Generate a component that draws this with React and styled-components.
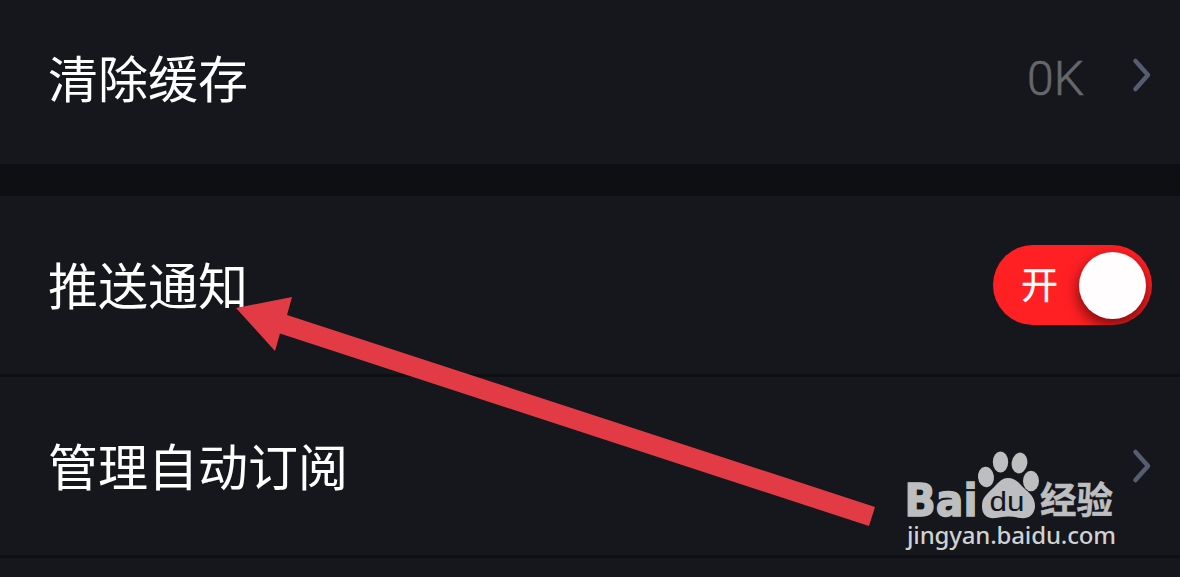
import React from "react";
import styled, { createGlobalStyle } from "styled-components";

const GlobalStyle = createGlobalStyle`
  * { box-sizing: border-box; }
  body { margin: 0; background: #15171c; overflow: hidden; }
`;

const Screen = styled.main`
  position: relative;
  display: flex;
  flex-direction: column;
  width: 1180px;
  height: 577px;
  overflow: hidden;
  background: #15171c;
  color: #fff;
  font-family: Roboto, "Noto Sans CJK SC", sans-serif;
`;

const Row = styled.section`
  display: flex;
  flex: none;
  align-items: center;
  height: ${(p) => p.$height}px;
  padding: 0 28px 0 48px;
`;

const Divider = styled.div`
  flex: none;
  height: ${(p) => p.$size}px;
  background: #0e0f13;
`;

const Label = styled.span`
  flex: 1;
  padding-bottom: ${(p) => p.$lift || 0}px;
  font-family: "Noto Sans CJK SC", sans-serif;
  font-size: 50px;
  line-height: 72px;
`;

const Value = styled.span`
  margin-right: 48px;
  padding-bottom: 7px;
  color: #66676a;
  font-size: 48px;
  font-weight: 300;
  line-height: 60px;
  -webkit-text-stroke: 0.6px #66676a;
`;

const Chevron = styled.svg`
  display: block;
  width: 20px;
  height: 36px;
  margin-bottom: ${(p) => p.$lift}px;
`;

const Toggle = styled.div`
  display: flex;
  align-items: center;
  justify-content: space-between;
  width: 159px;
  height: 80px;
  padding: 0 6px 0 28px;
  overflow: hidden;
  border-radius: 40px;
  background: #ff2024;
`;

const ToggleText = styled.span`
  padding-bottom: 4px;
  font-family: "Noto Sans CJK SC", sans-serif;
  font-size: 37px;
  line-height: 50px;
  -webkit-text-stroke: 0.3px #fff;
`;

const Knob = styled.span`
  width: 67px;
  height: 67px;
  border-radius: 50%;
  background: #fffdfe;
  box-shadow: 0 6px 14px 1px rgba(60, 0, 0, 0.65);
`;

const Arrow = styled.svg`
  position: absolute;
  top: 290px;
  left: 230px;
`;

const Watermark = styled.svg`
  position: absolute;
  top: 445px;
  left: 900px;
`;

function Next({ lift = 0 }) {
  return (
    <Chevron viewBox="0 0 20 36" $lift={lift}>
      <path d="M3.500 4 L16 18 L3.500 32" fill="none" stroke="#565c72" strokeWidth="4.500" strokeLinecap="round" strokeLinejoin="round" />
    </Chevron>
  );
}

export default function App() {
  return (
    <>
      <GlobalStyle />
      <Screen>
        <Row $height={164}>
          <Label $lift={13}>清除缓存</Label>
          <Value>0K</Value>
          <Next lift={14} />
        </Row>
        <Divider $size={32} />
        <Row $height={178}>
          <Label $lift={4}>推送通知</Label>
          <Toggle>
            <ToggleText>开</ToggleText>
            <Knob />
          </Toggle>
        </Row>
        <Divider $size={3} />
        <Row $height={178}>
          <Label $lift={4}>管理自动订阅</Label>
          <Next />
        </Row>
        <Divider $size={3} />
        <Arrow width="655" height="245" viewBox="230 290 655 245">
          <path d="M236 308 L292 297 L287 315 L875 507 L869 526 L280 333.500 L275 351 Z" fill="#e33b46" />
        </Arrow>
        <Watermark width="225" height="110" viewBox="900 445 225 110" fill="#bdbebf">
          <text x="904.500" y="516" fontFamily="DejaVu Sans, sans-serif" fontSize="45" fontWeight="700" stroke="#bdbebf" strokeWidth="1.500" textLength="73" lengthAdjust="spacingAndGlyphs">Bai</text>
          <ellipse cx="986" cy="477" rx="8" ry="10.300" transform="rotate(-6 986 477)" />
          <ellipse cx="1000.500" cy="462" rx="7.700" ry="10.500" />
          <ellipse cx="1019.500" cy="463" rx="7.800" ry="10.500" transform="rotate(10 1019.500 463)" />
          <ellipse cx="1031" cy="481" rx="8" ry="10.300" />
          <path d="M1008 478 C1017 478 1020 485 1026 490 C1032 495 1035 499 1035 507 C1034 515 1029 519 1020 518 C1012 516 1004 516 996 518 C987 519 982 515 982 506 C982 498 986 495 991 490 C997 485 1000 478 1008 478 Z" />
          <text x="989.500" y="511" fill="#15171c" fontFamily="Liberation Sans, sans-serif" fontSize="28" textLength="35" lengthAdjust="spacingAndGlyphs">du</text>
          <text x="1040" y="514" fontFamily="Noto Sans CJK SC, sans-serif" fontSize="37" fontWeight="700" stroke="#bdbebf" strokeWidth="0.500" textLength="73" lengthAdjust="spacingAndGlyphs">经验</text>
          <text x="907" y="544" fill="#d0d1d2" fontFamily="Noto Sans, sans-serif" fontSize="24" fontWeight="500" textLength="209" lengthAdjust="spacing">jingyan.baidu.com</text>
        </Watermark>
      </Screen>
    </>
  );
}
